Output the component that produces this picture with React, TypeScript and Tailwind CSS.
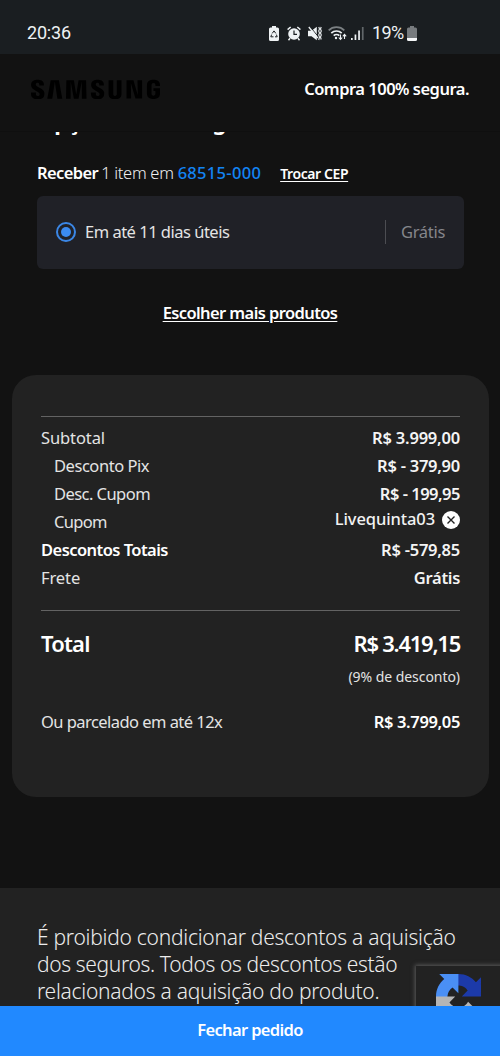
import type { ReactNode } from "react";
import { SiSamsung } from "react-icons/si";

const rows = [
  { label: "Subtotal", value: "R$ 3.999,00", labelClass: "tracking-[-0.1px]", valueClass: "tracking-[-0.2px]" },
  { label: "Desconto Pix", value: "R$ - 379,90", labelClass: "pl-[13px] tracking-[-0.45px]", valueClass: "tracking-[-0.25px]" },
  { label: "Desc. Cupom", value: "R$ - 199,95", labelClass: "pl-[13px] tracking-[-0.55px]", valueClass: "tracking-[-0.5px]" },
  { label: "Cupom", value: "Livequinta03", labelClass: "pl-[13px] tracking-[-0.7px]", valueClass: "tracking-[-0.1px]", coupon: true },
  { label: "Descontos Totais", value: "R$ -579,85", labelClass: "font-semibold text-white tracking-[-0.55px]", valueClass: "tracking-[-0.25px]" },
  { label: "Frete", value: "Grátis", labelClass: "tracking-[-0.1px]", valueClass: "tracking-[-0.3px]" },
];

export default function App() {
  return (
    <div className="flex h-[1056px] w-[500px] flex-col overflow-hidden bg-[#121212] font-['Noto_Sans',sans-serif] text-[16.5px] text-[#e4e4e4]">
      <StatusBar />
      <header className="flex h-[77px] shrink-0 items-center justify-between bg-[#121212] pr-[31px] pb-[7px] pl-[31px]">
        <div className="flex h-5 w-[129px] items-center overflow-hidden">
          <SiSamsung className="size-[129px] shrink-0 text-black" />
        </div>
        <span className="font-semibold tracking-[-0.5px] whitespace-nowrap text-white">Compra 100% segura.</span>
      </header>

      <main className="flex h-[757px] shrink-0 flex-col">
        {/* section title, mostly scrolled under the header */}
        <div className="flex h-[4px] shrink-0 items-end overflow-hidden border-t border-[#0f0f0f] pl-[37px]">
          <h2 className="text-[22px] leading-[28px] font-bold tracking-[-0.2px] text-white">Opções de entrega</h2>
        </div>
        <div className="mt-[26px] flex h-6 items-center pl-[37px] leading-6 whitespace-nowrap">
          <span className="font-semibold tracking-[-0.6px] text-white">Receber</span>
          <span className="ml-[3px] font-light tracking-[-0.3px] text-[#f0f0f0]">1 item em</span>
          <span className="ml-1 font-medium tracking-[0.3px] text-[#1384f3]">68515-000</span>
          <a className="ml-[19px] pt-px text-[14px] font-semibold tracking-[-0.4px] text-white underline underline-offset-2">Trocar CEP</a>
        </div>
        <div className="mt-[11px] ml-[37px] flex h-[73px] w-[427px] shrink-0 items-center rounded-md bg-[#202127] px-[19px] pb-px">
          <span className="flex size-5 items-center justify-center rounded-full border-2 border-[#3b87e6]">
            <span className="size-[10px] rounded-full bg-[#3b8bf0]" />
          </span>
          <span className="ml-[9px] tracking-[-0.5px]">Em até 11 dias úteis</span>
          <span className="ml-auto h-6 w-px bg-[#4c4d52]" />
          <span className="ml-[15px] tracking-[-0.3px] text-[#85868b]">Grátis</span>
        </div>
        <a className="mt-8 self-center leading-6 font-semibold tracking-[-0.6px] whitespace-nowrap text-white underline underline-offset-2">
          Escolher mais produtos
        </a>

        <section className="mt-[50px] ml-3 flex h-[422px] w-[477px] shrink-0 flex-col rounded-[24px] bg-[#222222] pt-[41px] pr-[29px] pl-[29px]">
          <div className="flex h-[195px] shrink-0 flex-col border-t border-b border-[#636363] pt-[7px]">
            {rows.map((row) => (
              <div key={row.label} className="flex h-7 shrink-0 items-center justify-between whitespace-nowrap">
                <span className={row.labelClass}>{row.label}</span>
                {row.coupon ? (
                  <span className="mb-[5px] flex items-center gap-[7px] font-medium text-[#f2f2f2]">
                    <span className={row.valueClass}>{row.value}</span>
                    <CloseIcon />
                  </span>
                ) : (
                  <span className={`font-semibold text-[#f4f4f4] ${row.valueClass}`}>{row.value}</span>
                )}
              </div>
            ))}
          </div>
          <div className="mt-[16px] flex h-8 items-center justify-between text-[22px] font-semibold text-white">
            <span className="tracking-[-0.8px]">Total</span>
            <span className="tracking-[-1.25px]">R$ 3.419,15</span>
          </div>
          <span className="mt-[8px] self-end text-[14px] leading-5 tracking-[-0.05px]">(9% de desconto)</span>
          <div className="mt-[21px] flex h-7 items-center justify-between whitespace-nowrap">
            <span className="tracking-[-0.55px]">Ou parcelado em até 12x</span>
            <span className="font-semibold tracking-[-0.35px] text-white">R$ 3.799,05</span>
          </div>
        </section>
      </main>

      <footer className="relative flex h-[118px] shrink-0 flex-col overflow-hidden bg-[#222222] pt-[36px] pl-[37px] text-[21px] leading-[27px] font-light whitespace-nowrap text-[#ececec]">
        <Line className="tracking-[-0.26px]">É proibido condicionar descontos a aquisição</Line>
        <Line className="tracking-[-0.36px]">dos seguros. Todos os descontos estão</Line>
        <Line className="tracking-[-0.26px]">relacionados a aquisição do produto.</Line>
        <div className="absolute top-[78px] left-[416px] h-[60px] w-[100px] bg-[#222222] pt-2 pl-5 shadow-[0_0_4px_1px_#5c5c5c]">
          <RecaptchaLogo />
        </div>
      </footer>
      <button className="h-[50px] shrink-0 bg-[#2189ff] pb-[2px] font-semibold tracking-[-0.65px] text-white">Fechar pedido</button>
    </div>
  );
}

function Line({ children, className }: { children: ReactNode; className: string }) {
  return (
    <div>
      <span className={className}>{children}</span>
    </div>
  );
}

function CloseIcon() {
  return (
    <svg className="size-[18px]" viewBox="0 0 18 18">
      <circle cx="9" cy="9" r="9" fill="#fff" />
      <path d="M5.5 5.5l7 7M12.5 5.5l-7 7" stroke="#222" strokeWidth="1.4" />
    </svg>
  );
}

function StatusBar() {
  return (
    <div className="flex h-[54px] shrink-0 items-center bg-[#1a1e21] pt-3 pl-[27px] font-[Roboto,sans-serif] text-[18px] text-[#eef2f4]">
      <span className="w-[242px] pb-[2px] tracking-[-0.2px]">20:36</span>
      {/* battery saver */}
      <svg className="h-[15px] w-[10px]" viewBox="0 0 10 15" fill="none">
        <path d="M3 0h4v1.5h1.5A1.5 1.5 0 0 1 10 3v10.5A1.5 1.5 0 0 1 8.5 15h-7A1.5 1.5 0 0 1 0 13.5V3a1.5 1.5 0 0 1 1.5-1.5H3z" fill="#eef2f4" />
        <path d="M3.2 7.4L5 4.900l1.800 2.500M7.400 8.600l.8 2.200H6M4.500 10.800H1.800l.8-2.200" stroke="#1a1e21" strokeWidth="1" />
      </svg>
      {/* alarm */}
      <svg className="ml-2 h-[15px] w-[14px]" viewBox="0 0 14 15" fill="none">
        <circle cx="7" cy="8" r="5.8" fill="#eef2f4" />
        <path d="M.6 3.600L3.700 1M13.400 3.600L10.300 1M3 12.300l-1.500 1.900M11 12.300l1.500 1.900" stroke="#eef2f4" strokeWidth="1.500" />
        <path d="M7 4.500v3.800h3" stroke="#1a1e21" strokeWidth="1.200" />
      </svg>
      {/* vibrate / mute */}
      <svg className="ml-[7px] h-[15px] w-[14px]" viewBox="0 0 14 15" fill="none">
        <path d="M0 4.800h3.500L8.800.8v13.400l-5.300-4H0z" fill="#eef2f4" />
        <path d="M1.800.4l9 11" stroke="#1a1e21" strokeWidth="1" />
        <path d="M.8 1l9 11" stroke="#eef2f4" strokeWidth="1.300" />
        <path d="M10.800 1l.7 2-.8 2 .8 2-.8 2 .8 2-.8 3M13.200 1l-.7 2 .8 2-.8 2 .8 2-.8 2 .7 2.500" stroke="#eef2f4" strokeWidth="1.100" />
      </svg>
      {/* wifi */}
      <svg className="ml-[6px] h-[15px] w-[19px]" viewBox="0 0 19 15" fill="none">
        <path d="M.7 4.300a11 11 0 0 1 15.600 0" stroke="#7b8083" strokeWidth="1.700" />
        <path d="M3.300 7.200a7.300 7.300 0 0 1 10.400 0M5.700 9.700a4 4 0 0 1 5.600 0" stroke="#eef2f4" strokeWidth="1.700" />
        <circle cx="8" cy="12" r="1.200" fill="#eef2f4" />
        <path d="M12.500 8.500v5M10.800 11.500l1.700 2 1.700-2M16.500 13V8.500M14.800 10.300l1.700-2 1.700 2" stroke="#eef2f4" strokeWidth="1.100" />
      </svg>
      {/* signal */}
      <svg className="ml-1 h-[15px] w-[13px]" viewBox="0 0 13 15">
        <path d="M0 12h1.700v2H0zM3.600 8.500h1.700V14H3.600zM7.200 4.500h1.700V14H7.200z" fill="#eef2f4" />
        <path d="M10.900 1h1.700v13h-1.700z" fill="#62676a" />
      </svg>
      <span className="ml-2 pb-[2px] tracking-[-0.6px]">19%</span>
      <svg className="ml-[3px] h-[15px] w-[10px]" viewBox="0 0 10 15">
        <path d="M3 0h4v1.500h1.500A1.500 1.500 0 0 1 10 3v9H0V3a1.500 1.500 0 0 1 1.500-1.500H3z" fill="#777b7e" />
        <path d="M0 12h10v1.500A1.500 1.500 0 0 1 8.500 15h-7A1.500 1.500 0 0 1 0 13.500z" fill="#f4f6f7" />
      </svg>
    </div>
  );
}

function RecaptchaLogo() {
  return (
    <svg className="size-[45px]" viewBox="0 0 64 64">
      <path fill="#1c3aa9" d="M64 31.955l-.033-1.370V4.687l-7.160 7.160C50.948 4.674 42.033.093 32.050.093c-10.400 0-19.622 4.960-25.458 12.640l11.736 11.860a15.550 15.550 0 0 1 4.754-5.334c2.050-1.600 4.952-2.906 8.968-2.906.485 0 .860.057 1.135.163 4.976.393 9.288 3.140 11.828 7.124l-8.307 8.307L64 31.953" />
      <path fill="#4a8ff5" d="M31.862.094l-1.370.033H4.594l7.160 7.160C4.580 13.147 0 22.060 0 32.046c0 10.400 4.960 19.622 12.640 25.458L24.500 45.768a15.550 15.550 0 0 1-5.334-4.754c-1.600-2.050-2.906-4.952-2.906-8.968 0-.485.057-.860.163-1.135.393-4.976 3.140-9.288 7.124-11.828l8.307 8.307L31.860.095" />
      <path fill="#b5b5b5" d="M.001 32.045l.033 1.370v25.898l7.160-7.160c5.860 7.173 14.774 11.754 24.760 11.754 10.400 0 19.622-4.960 25.458-12.640l-11.736-11.860a15.550 15.550 0 0 1-4.754 5.334c-2.050 1.600-4.952 2.906-8.968 2.906-.485 0-.860-.057-1.135-.163-4.976-.393-9.288-3.140-11.828-7.124l8.307-8.307L0 32.045" />
    </svg>
  );
}
